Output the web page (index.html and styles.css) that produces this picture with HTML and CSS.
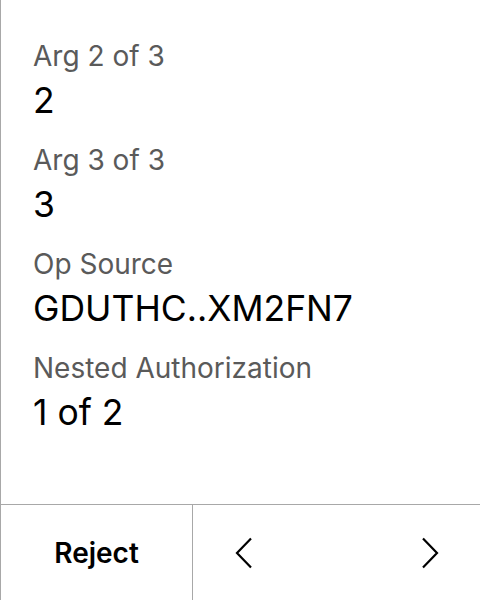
FILE: index.html
```html
<!DOCTYPE html>
<html>
<head>
<meta charset="utf-8">
<link rel="stylesheet" href="styles.css">
</head>
<body>
<div class="screen">
  <div class="content">
    <div class="field">
      <div class="label">Arg 2 of 3</div>
      <div class="value">2</div>
    </div>
    <div class="field">
      <div class="label">Arg 3 of 3</div>
      <div class="value">3</div>
    </div>
    <div class="field">
      <div class="label">Op Source</div>
      <div class="value">GDUTHC..XM2FN7</div>
    </div>
    <div class="field">
      <div class="label">Nested Authorization</div>
      <div class="value">1 of 2</div>
    </div>
  </div>
  <div class="footer">
    <div class="reject">Reject</div>
    <div class="nav">
      <svg class="chev" width="18" height="32" viewBox="0 0 18 32"><path d="M16 1.5 L2 16 L16 30.5" fill="none" stroke="#000" stroke-width="2.2"/></svg>
      <svg class="chev" width="18" height="32" viewBox="0 0 18 32"><path d="M2 1.5 L16 16 L2 30.5" fill="none" stroke="#000" stroke-width="2.2"/></svg>
    </div>
  </div>
</div>
</body>
</html>
```
FILE: styles.css
```css
html, body {
  margin: 0;
  padding: 0;
  background: #fff;
}
.screen {
  width: 480px;
  height: 600px;
  box-sizing: border-box;
  border-left: 1px solid #a8a8a8;
  display: flex;
  flex-direction: column;
  font-family: Inter, "Noto Sans", sans-serif;
}
.content {
  flex: 1;
  padding: 38px 0 0 32px;
  display: flex;
  flex-direction: column;
  gap: 20px;
}
.field {
  display: flex;
  flex-direction: column;
  gap: 6px;
}
.label {
  font-size: 28px;
  line-height: 36px;
  color: #5a5a5a;
}
.value {
  font-size: 35.5px;
  line-height: 42px;
  color: #000;
}
.footer {
  height: 95px;
  border-top: 1px solid #a8a8a8;
  display: flex;
}
.reject {
  width: 191px;
  border-right: 1px solid #a8a8a8;
  display: flex;
  align-items: center;
  justify-content: center;
  font-size: 28px;
  font-weight: 600;
  color: #000;
}
.nav {
  flex: 1;
  display: flex;
  align-items: center;
  justify-content: space-between;
  padding: 0 41px 0 42px;
}
.chev {
  display: block;
}
```
